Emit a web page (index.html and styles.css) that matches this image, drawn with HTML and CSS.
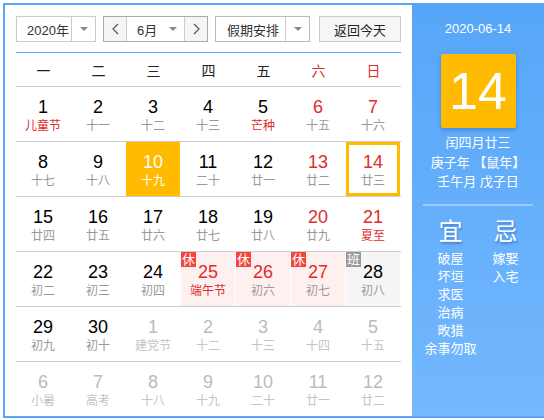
FILE: index.html
```html
<!DOCTYPE html>
<html lang="zh-CN">
<head>
<meta charset="utf-8">
<link rel="stylesheet" href="styles.css">
</head>
<body>
<div class="cal">
  <div class="main">
    <div class="toolbar">
      <div class="sel sel-year">
        <span class="sel-text">2020年</span>
        <span class="sel-arrow"><i class="tri"></i></span>
      </div>
      <div class="sel sel-month">
        <span class="nav"><svg width="7" height="12" viewBox="0 0 7 12"><polyline points="6,1 1,6 6,11" fill="none" stroke="#555" stroke-width="1.2"/></svg></span>
        <span class="month-text">6月</span>
        <span class="month-arrow"><i class="tri"></i></span>
        <span class="nav nav-r"><svg width="7" height="12" viewBox="0 0 7 12"><polyline points="1,1 6,6 1,11" fill="none" stroke="#555" stroke-width="1.2"/></svg></span>
      </div>
      <div class="sel sel-hol">
        <span class="sel-text hol-text">假期安排</span>
        <span class="sel-arrow"><i class="tri"></i></span>
      </div>
      <div class="btn-today">返回今天</div>
    </div>
    <div class="week">
      <span>一</span><span>二</span><span>三</span><span>四</span><span>五</span><span class="red">六</span><span class="red">日</span>
    </div>
    <div class="grid">
      <div class="row">
        <div class="cell"><b>1</b><em class="fest">儿童节</em></div>
        <div class="cell"><b>2</b><em>十一</em></div>
        <div class="cell"><b>3</b><em>十二</em></div>
        <div class="cell"><b>4</b><em>十三</em></div>
        <div class="cell"><b>5</b><em class="fest">芒种</em></div>
        <div class="cell wk"><b>6</b><em>十五</em></div>
        <div class="cell wk"><b>7</b><em>十六</em></div>
      </div>
      <div class="row">
        <div class="cell"><b>8</b><em>十七</em></div>
        <div class="cell"><b>9</b><em>十八</em></div>
        <div class="cell today"><b>10</b><em>十九</em></div>
        <div class="cell"><b>11</b><em>二十</em></div>
        <div class="cell"><b>12</b><em>廿一</em></div>
        <div class="cell wk"><b>13</b><em>廿二</em></div>
        <div class="cell wk selected"><b>14</b><em>廿三</em></div>
      </div>
      <div class="row">
        <div class="cell"><b>15</b><em>廿四</em></div>
        <div class="cell"><b>16</b><em>廿五</em></div>
        <div class="cell"><b>17</b><em>廿六</em></div>
        <div class="cell"><b>18</b><em>廿七</em></div>
        <div class="cell"><b>19</b><em>廿八</em></div>
        <div class="cell wk"><b>20</b><em>廿九</em></div>
        <div class="cell wk"><b>21</b><em class="fest">夏至</em></div>
      </div>
      <div class="row">
        <div class="cell"><b>22</b><em>初二</em></div>
        <div class="cell"><b>23</b><em>初三</em></div>
        <div class="cell"><b>24</b><em>初四</em></div>
        <div class="cell rest"><i class="badge">休</i><b>25</b><em class="fest">端午节</em></div>
        <div class="cell rest"><i class="badge">休</i><b>26</b><em>初六</em></div>
        <div class="cell rest"><i class="badge">休</i><b>27</b><em>初七</em></div>
        <div class="cell work"><i class="badge">班</i><b>28</b><em>初八</em></div>
      </div>
      <div class="row">
        <div class="cell"><b>29</b><em>初九</em></div>
        <div class="cell"><b>30</b><em>初十</em></div>
        <div class="cell other"><b>1</b><em>建党节</em></div>
        <div class="cell other"><b>2</b><em>十二</em></div>
        <div class="cell other"><b>3</b><em>十三</em></div>
        <div class="cell other"><b>4</b><em>十四</em></div>
        <div class="cell other"><b>5</b><em>十五</em></div>
      </div>
      <div class="row last">
        <div class="cell other"><b>6</b><em>小暑</em></div>
        <div class="cell other"><b>7</b><em>高考</em></div>
        <div class="cell other"><b>8</b><em>十八</em></div>
        <div class="cell other"><b>9</b><em>十九</em></div>
        <div class="cell other"><b>10</b><em>二十</em></div>
        <div class="cell other"><b>11</b><em>廿一</em></div>
        <div class="cell other"><b>12</b><em>廿二</em></div>
      </div>
    </div>
  </div>
  <div class="side">
    <div class="side-date">2020-06-14</div>
    <div class="big-day">14</div>
    <div class="lunar-info">
      <div>闰四月廿三</div>
      <div>庚子年 【鼠年】</div>
      <div>壬午月 戊子日</div>
    </div>
    <div class="divider"></div>
    <div class="yiji">
      <div class="yj-col">
        <div class="yj-title">宜</div>
        <div>破屋</div><div>坏垣</div><div>求医</div><div>治病</div><div>畋猎</div><div>余事勿取</div>
      </div>
      <div class="yj-col">
        <div class="yj-title">忌</div>
        <div>嫁娶</div><div>入宅</div>
      </div>
    </div>
  </div>
</div>
</body>
</html>
```
FILE: styles.css
```css
html, body {
  margin: 0;
  padding: 0;
  overflow: hidden;
  background: #fff;
}
body {
  padding: 3px 0 0 3px;
  font-family: "Liberation Sans", "Noto Sans CJK SC", sans-serif;
  color: #333;
}
.cal {
  display: flex;
  width: 541px;
  box-sizing: border-box;
  border: 2px solid #55a6f7;
  border-right: none;
}
.main {
  width: 407px;
  box-sizing: border-box;
  padding: 11px 11px 0 11px;
  background: #fff;
}
.toolbar {
  display: flex;
  height: 26px;
  font-size: 13px;
  color: #333;
}
.sel {
  display: flex;
  box-sizing: border-box;
  height: 26px;
  border: 1px solid #ccc;
  background: #fff;
}
.sel-year { width: 80px; margin-right: 7px; }
.sel-month { width: 105px; margin-right: 7px; border-color: #aaa; }
.sel-hol { width: 95px; margin-right: 9px; border-color: #bbb; }
.sel-text {
  flex: 1;
  display: flex;
  align-items: center;
  padding-left: 10px;
  border-right: 1px solid #ccc;
}
.hol-text { padding-left: 11px; }
.sel-arrow {
  width: 23px;
  display: flex;
  align-items: center;
  justify-content: center;
}
.tri {
  display: block;
  width: 0;
  height: 0;
  border-left: 4px solid transparent;
  border-right: 4px solid transparent;
  border-top: 4px solid #888;
}
.nav {
  width: 22px;
  display: flex;
  align-items: center;
  justify-content: center;
  background: #f5f5f5;
  border-right: 1px solid #ccc;
}
.nav-r {
  border-right: none;
  border-left: 1px solid #ccc;
}
.month-text {
  flex: 1;
  display: flex;
  align-items: center;
  padding-left: 10px;
}
.month-arrow {
  width: 22px;
  display: flex;
  align-items: center;
  justify-content: center;
}
.btn-today {
  width: 82px;
  box-sizing: border-box;
  height: 26px;
  border: 1px solid #ccc;
  background: #f6f6f6;
  display: flex;
  align-items: center;
  justify-content: center;
  color: #222;
}
.week {
  margin-top: 10px;
  border-top: 1px solid #55a6f7;
  border-bottom: 1px solid #ccc;
  height: 33px;
  display: grid;
  grid-template-columns: repeat(7, 55px);
  align-items: center;
  font-size: 14px;
  color: #222;
}
.week span { text-align: center; }
.week .red { color: #e02b2b; }
.row {
  display: grid;
  grid-template-columns: repeat(7, 54px);
  column-gap: 1px;
  padding-right: 1px;
  height: 54px;
  border-bottom: 1px solid #ccc;
}
.row.last { border-bottom: none; }
.cell {
  position: relative;
  display: flex;
  flex-direction: column;
  align-items: center;
  box-sizing: border-box;
  height: 54px;
  padding-top: 9px;
}
.cell b {
  font-weight: normal;
  font-size: 18px;
  line-height: 22px;
  color: #000;
}
.cell em {
  font-style: normal;
  font-size: 12px;
  line-height: 16px;
  color: #999;
}
.cell em.fest { color: #e02b2b; }
.cell.wk b { color: #e02b2b; }
.cell.rest { background: #fff0f0; }
.cell.rest b { color: #e02b2b; }
.cell.work { background: #f5f5f5; }
.cell.today { background: #ffbb00; }
.cell.today b, .cell.today em { color: #fff; }
.cell.selected { box-shadow: inset 0 0 0 3px #ffbb00; }
.cell.other b { color: #bbb; }
.cell.other em { color: #c4c4c4; }
.badge {
  position: absolute;
  left: 0;
  top: 0;
  width: 15px;
  height: 15px;
  font-style: normal;
  font-size: 13px;
  line-height: 15px;
  text-align: center;
  color: #fff;
  background: #f2453d;
}
.work .badge { background: #999; }
.side {
  width: 132px;
  box-sizing: border-box;
  padding-top: 14px;
  background: linear-gradient(to bottom, #56a6f8, #74b8fe);
  color: #fff;
  display: flex;
  flex-direction: column;
  align-items: center;
}
.side-date {
  font-size: 13px;
  line-height: 20px;
}
.big-day {
  margin-top: 15px;
  width: 75px;
  height: 74px;
  background: #ffbb00;
  border-radius: 2px;
  box-shadow: 0 2px 4px rgba(0, 60, 140, 0.3);
  font-size: 52px;
  line-height: 74px;
  text-align: center;
  color: #fff;
}
.lunar-info {
  margin-top: 5px;
  font-size: 13px;
  line-height: 19.5px;
  text-align: center;
}
.divider {
  margin-top: 12px;
  width: 110px;
  height: 2px;
  background: #9ccbfb;
}
.yiji {
  margin-top: 11px;
  display: flex;
}
.yj-col {
  width: 55px;
  display: flex;
  flex-direction: column;
  align-items: center;
  font-size: 13px;
  line-height: 18px;
}
.yj-title {
  font-size: 24px;
  line-height: 30px;
  margin-bottom: 3px;
  text-shadow: 1px 2px 2px rgba(0, 50, 130, 0.35);
}
```
